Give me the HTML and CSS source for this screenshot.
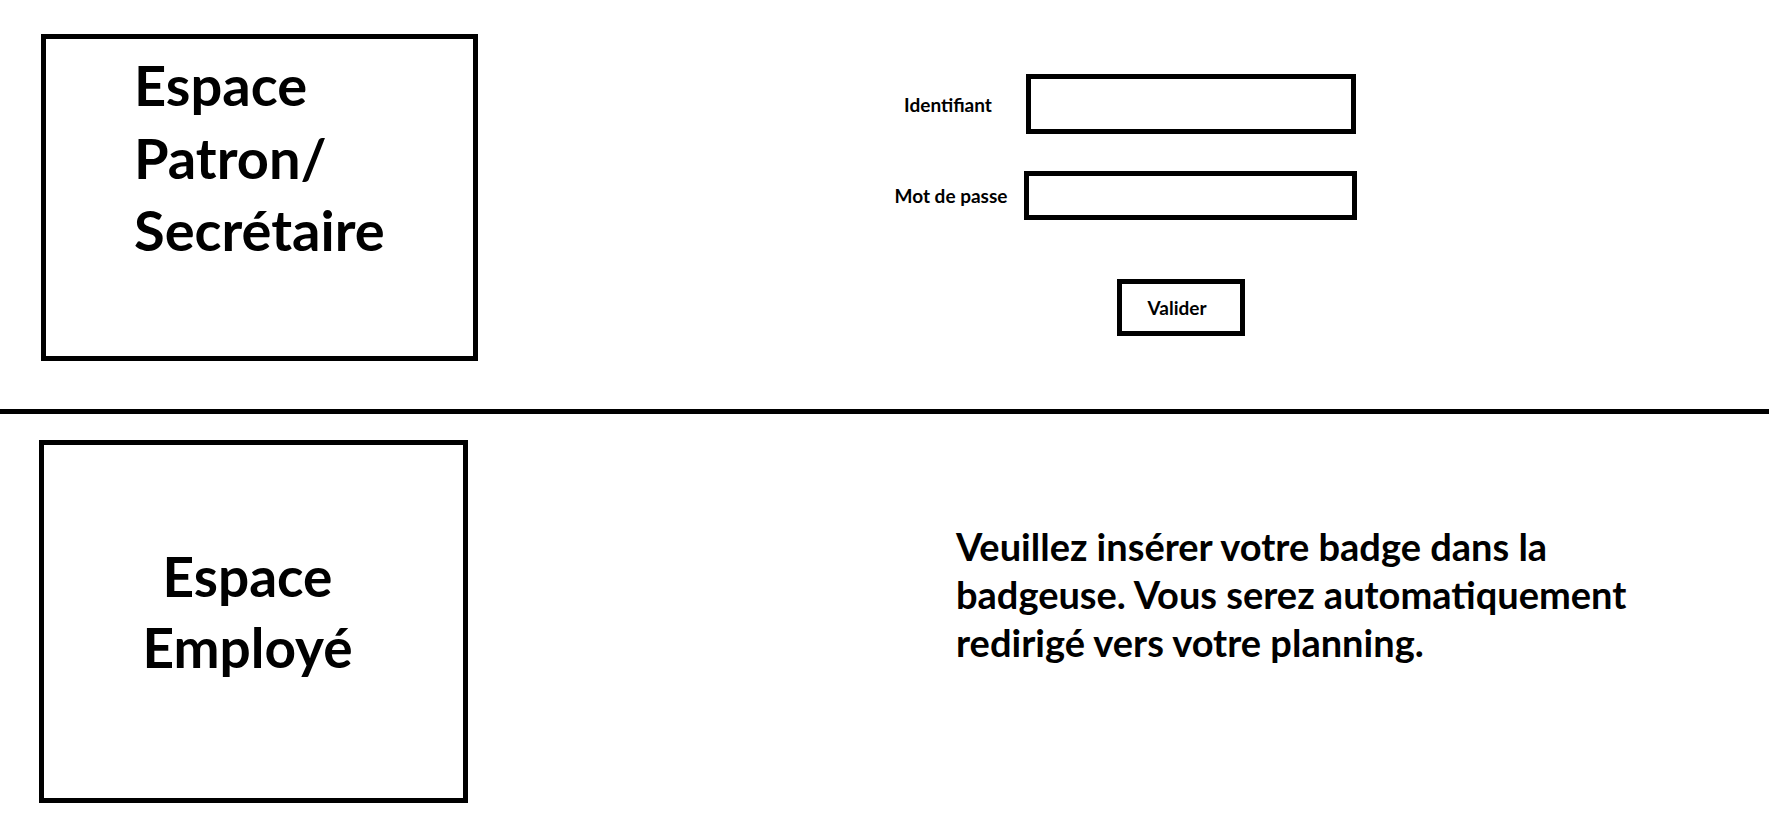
FILE: index.html
```html
<!DOCTYPE html>
<html lang="fr">
<head>
    <meta charset="UTF-8">
    <meta name="viewport" content="width=device-width, initial-scale=1.0">
    <title>Connexion</title>
    <link rel="stylesheet" href="styles.css">
</head>
<body>
    <section class="top">
        <div class="panel panel-boss">
            <h2 class="panel-title">Espace<br>Patron/<br>Secrétaire</h2>
        </div>

        <form class="login" onsubmit="return false">
            <label for="login">Identifiant</label>
            <input type="text" id="login" class="field field-login">

            <label for="pwd">Mot de passe</label>
            <input type="password" id="pwd" class="field field-pwd">

            <button type="submit" class="submit-btn">Valider</button>
        </form>
    </section>

    <hr class="divider">

    <section class="bottom">
        <div class="panel panel-employee">
            <h2 class="panel-title">Espace<br>Employé</h2>
        </div>

        <p class="badge-msg">Veuillez insérer votre badge dans la<br>badgeuse. Vous serez automatiquement<br>redirigé vers votre planning.</p>
    </section>
</body>
</html>
```

FILE: styles.css
```css
* {
    margin: 0;
    padding: 0;
    box-sizing: border-box;
}

body {
    background: #fff;
    color: #000;
    font-family: 'Lato', 'Open Sans', sans-serif;
    font-weight: bold;
}

.top {
    display: flex;
    align-items: flex-start;
    height: 409px;
    padding: 34px 0 0 41px;
}

.panel {
    border: 5px solid #000;
}

.panel-title {
    font-weight: bold;
}

.panel-boss {
    width: 437px;
    height: 327px;
    padding: 10px 0 0 88px;
}

.panel-boss .panel-title {
    font-size: 56px;
    line-height: 72.5px;
}

.login {
    display: grid;
    grid-template-columns: 136px 333px;
    column-gap: 8px;
    row-gap: 37px;
    align-items: center;
    margin: 40px 0 0 402px;
}

.login label {
    font-size: 19px;
    text-align: center;
}

.login label[for="pwd"] {
    padding-left: 6px;
}

.field {
    border: 5px solid #000;
    background: #fff;
    outline: none;
    font-size: 16px;
    padding: 0 8px;
}

.field-login {
    width: 330px;
    height: 60px;
    margin-left: 2px;
}

.field-pwd {
    width: 333px;
    height: 49px;
}

.submit-btn {
    grid-column: 2;
    justify-self: start;
    width: 128px;
    height: 57px;
    margin: 22px 0 0 93px;
    padding-right: 8px;
    border: 5px solid #000;
    background: #fff;
    font-family: inherit;
    font-weight: bold;
    font-size: 19px;
    color: #000;
    cursor: pointer;
}

.divider {
    border: none;
    height: 5px;
    background: #000;
}

.bottom {
    display: flex;
    align-items: flex-start;
    padding: 26px 0 0 39px;
}

.panel-employee {
    width: 429px;
    height: 363px;
    display: flex;
    align-items: center;
    justify-content: center;
    text-align: center;
}

.panel-employee .panel-title {
    font-size: 55px;
    line-height: 71px;
    margin: 0 12px 20px 0;
}

.badge-msg {
    font-size: 38px;
    line-height: 48px;
    margin: 82px 0 0 488px;
}
```
